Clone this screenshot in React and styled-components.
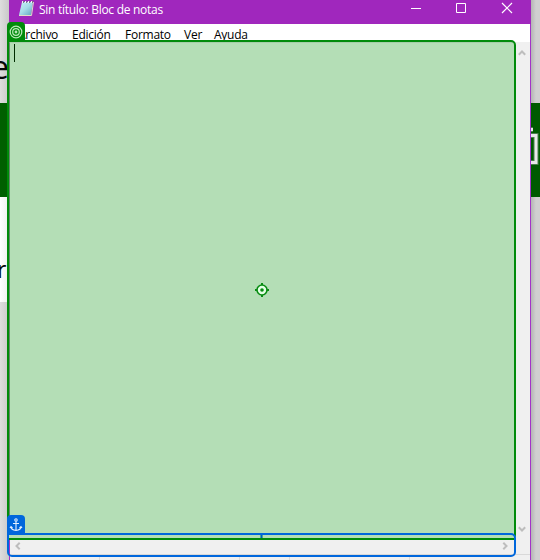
import React from "react";
import styled, { createGlobalStyle } from "styled-components";

const GlobalStyle = createGlobalStyle`
  * { box-sizing: border-box; }
  body { margin: 0; overflow: hidden; font-family: "Open Sans", "Noto Sans", sans-serif; }
`;

const Desktop = styled.main`
  position: relative;
  display: grid;
  grid-template-columns: 9px 522px 9px;
  width: 540px;
  height: 560px;
  overflow: hidden;
  background: #d5d5d5;
`;

const Backdrop = styled.div`
  display: grid;
  grid-template-rows: 103px 94px 105px 1fr;
  min-width: 0;
  overflow: hidden;
  background: ${({ $right }) =>
    $right ? "linear-gradient(90deg, #b5b5b5, #d0d0d0 5px)" : "linear-gradient(90deg, #dedede, #c9c9c9)"};
`;

const Band = styled.div`
  overflow: hidden;
  background: ${({ $fill }) => $fill || "transparent"};
`;

const Letter = styled.div`
  width: 30px;
  margin-left: ${({ $x }) => $x}px;
  padding-top: ${({ $top }) => $top}px;
  color: #080808;
  font: ${({ $size }) => $size}px/30px "Open Sans", sans-serif;
`;

const EdgeIcon = styled.svg`
  display: block;
  width: 9px;
  height: 44px;
  margin-top: 24px;
`;

const Window = styled.section`
  display: grid;
  grid-template-rows: 24px 17px 496px 17px 1fr;
  border-right: 1px solid #a333c8;
  border-left: 1px solid #a333c8;
  background: #fff;
`;

const TitleBar = styled.header`
  display: flex;
  margin: 0 -1px;
  background: #a027bd;
`;

const NotepadIcon = styled.svg`
  width: 18px;
  height: 18px;
  margin-left: 9px;
`;

const Title = styled.h1`
  flex: 1;
  margin: 0 0 0 3px;
  color: #fff;
  font-size: 12px;
  font-weight: 400;
  line-height: 19px;
  letter-spacing: -0.28px;
  white-space: nowrap;
`;

const WindowButtons = styled.svg`
  width: 138px;
  height: 24px;
`;

const MenuBar = styled.nav`
  display: flex;
  padding-left: 8px;
  background: #fff;
`;

const MenuItem = styled.span`
  width: ${({ $width }) => $width}px;
  color: #000;
  font-size: 12px;
  line-height: 21px;
  letter-spacing: -0.25px;
  white-space: nowrap;
`;

const Editor = styled.div`
  display: grid;
  grid-template-columns: 505px 16px;
  margin-left: -1px;
`;

const TextArea = styled.div`
  padding: 1px 0 0 4px;
  border-top: 2px solid #a6cda9;
  border-left: 1px solid #66856c;
  background: #b4deb6;
`;

const Caret = styled.div`
  width: 1px;
  height: 18px;
  background: #002b00;
`;

const VerticalScroll = styled.div`
  display: flex;
  flex-direction: column;
  justify-content: space-between;
  align-items: center;
  padding: 7px 1px 4px 0;
  margin-top: 1px;
  background: #f0f0f0;
`;

const HorizontalScroll = styled.div`
  display: flex;
  justify-content: space-between;
  align-items: center;
  padding: 0 21px 0 4px;
  background: #f0f0f0;
`;

const Arrow = styled.svg`
  width: 8px;
  height: 8px;
  flex: none;
  transform: rotate(${({ $turn }) => $turn || 0}deg);
`;

const StatusBar = styled.footer`
  display: grid;
  grid-template-columns: 90px 140px 50px 120px 1fr;
  border-top: 1px solid #d9d9d9;
  background: #f0f0f0;
`;

const StatusCell = styled.div`
  border-right: ${({ $last }) => ($last ? "0" : "1px solid #dadada")};
`;

const Region = styled.div`
  position: absolute;
  left: 7px;
  top: ${({ $top }) => $top}px;
  width: 509px;
  height: ${({ $height }) => $height}px;
  border: 2px solid ${({ $color }) => $color};
  border-radius: 0 5px 5px 5px;
  background: ${({ $blue }) =>
    $blue ? "linear-gradient(#b4deb6 0 3px, #008b0a 3px 5px, transparent 5px)" : "transparent"};
`;

const Tag = styled.div`
  position: absolute;
  left: 7px;
  top: ${({ $top }) => $top}px;
  display: grid;
  place-items: center;
  width: 18px;
  height: 19px;
  border-radius: 4px 4px 0 0;
  background: ${({ $color }) => $color};
`;

const TagIcon = styled.svg`
  width: 14px;
  height: 14px;
  fill: none;
  stroke: ${({ $stroke }) => $stroke};
  stroke-width: ${({ $weight }) => $weight};
`;

const Target = styled.svg`
  position: absolute;
  left: 254px;
  top: 282px;
  width: 16px;
  height: 16px;
`;

const Pivot = styled.div`
  position: absolute;
  left: 260px;
  top: 535px;
  width: 3px;
  height: 3px;
  border: solid #4da598;
  border-width: 0 1px;
  background: #0060c0;
`;

function ScrollArrow({ turn }) {
  return (
    <Arrow $turn={turn} viewBox="0 0 8 8">
      <path d="M.8 5.7 4 2.5l3.2 3.2" fill="none" stroke="#bdbdbd" strokeWidth="2" />
    </Arrow>
  );
}

export default function App() {
  return (
    <>
      <GlobalStyle />
      <Desktop>
        <Backdrop>
          <Band><Letter $x={-9} $top={52} $size={32}>e</Letter></Band>
          <Band $fill="#005f00" />
          <Band $fill="linear-gradient(90deg, #fff, #eee)"><Letter $x={-3} $top={57} $size={23}>r</Letter></Band>
          <Band />
        </Backdrop>
        <Window>
          <TitleBar>
            <NotepadIcon viewBox="0 0 18 18">
              <defs>
                <linearGradient id="page" x1="0" y1="0" x2="1" y2="1">
                  <stop offset="0" stopColor="#c9f0f5" />
                  <stop offset=".5" stopColor="#a5dce8" />
                  <stop offset="1" stopColor="#5ea3bd" />
                </linearGradient>
              </defs>
              <path d="M4 2h11l-2 13H1z" fill="url(#page)" />
              <path d="m15.5 2-2 13.5H1" fill="none" stroke="#e3dcc9" />
              <path d="M5.5 1v2m3-2v2m3-2v2m3-2v2" stroke="#74798c" />
              <path d="M4.5 1v2m3-2v2m3-2v2m3-2v2" stroke="#f4f1fa" />
            </NotepadIcon>
            <Title>Sin título: Bloc de notas</Title>
            <WindowButtons viewBox="0 0 138 24" fill="none" stroke="#fff">
              <path d="M18 8.5h10" />
              <path d="M63.5 3.5h9v9h-9z" />
              <path d="m109 3 10 10m0-10-10 10" strokeWidth="1.2" />
            </WindowButtons>
          </TitleBar>
          <MenuBar>
            <MenuItem $width={54}>Archivo</MenuItem>
            <MenuItem $width={53}>Edición</MenuItem>
            <MenuItem $width={59}>Formato</MenuItem>
            <MenuItem $width={30}>Ver</MenuItem>
            <MenuItem $width={40}>Ayuda</MenuItem>
          </MenuBar>
          <Editor>
            <TextArea><Caret /></TextArea>
            <VerticalScroll>
              <ScrollArrow />
              <ScrollArrow turn={180} />
            </VerticalScroll>
          </Editor>
          <HorizontalScroll>
            <ScrollArrow turn={-90} />
            <ScrollArrow turn={90} />
          </HorizontalScroll>
          <StatusBar>
            <StatusCell /><StatusCell /><StatusCell /><StatusCell /><StatusCell $last />
          </StatusBar>
        </Window>
        <Backdrop $right>
          <Band />
          <Band $fill="#005a00">
            <EdgeIcon viewBox="0 0 9 44" fill="none">
              <path d="M0 2.5h2M0 8.5h5v27H0" stroke="#4c804c" strokeWidth="5" />
              <path d="M0 2.5h2M0 8.5h5v27H0" stroke="#e9e9e9" strokeWidth="3" />
            </EdgeIcon>
          </Band>
          <Band /><Band />
        </Backdrop>

        <Region $top={40} $height={500} $color="#008b0a" />
        <Region $top={533} $height={24} $color="#0067dc" $blue />
        <Tag $top={22} $color="#008b0a">
          <TagIcon viewBox="0 0 14 14" $stroke="#b9e9b9" $weight={1.2}>
            <circle cx="7" cy="7" r="5.8" />
            <circle cx="7" cy="7" r="3.3" />
            <circle cx="7" cy="7" r=".8" />
          </TagIcon>
        </Tag>
        <Tag $top={515} $color="#0067dc">
          <TagIcon viewBox="0 0 14 14" $stroke="#e5f1ff" $weight={1.1}>
            <circle cx="7" cy="2" r="1.2" />
            <path d="M7 3.2v9.3M4 5.5h6M2 8.5c0 2.2 2 3.7 5 4 3-.3 5-1.8 5-4M1 10l1-1.5L3.5 10m7 0L12 8.5l1 1.5" />
          </TagIcon>
        </Tag>
        <Target viewBox="0 0 16 16" fill="none" stroke="#078c12">
          <circle cx="8" cy="8" r="5" fill="#e4ffe5" strokeWidth="1.6" />
          <circle cx="8" cy="8" r="1.8" fill="#078c12" stroke="none" />
          <path d="M8 1v2m0 10v2M1 8h2m10 0h2" strokeWidth="2" />
        </Target>
        <Pivot />
      </Desktop>
    </>
  );
}
